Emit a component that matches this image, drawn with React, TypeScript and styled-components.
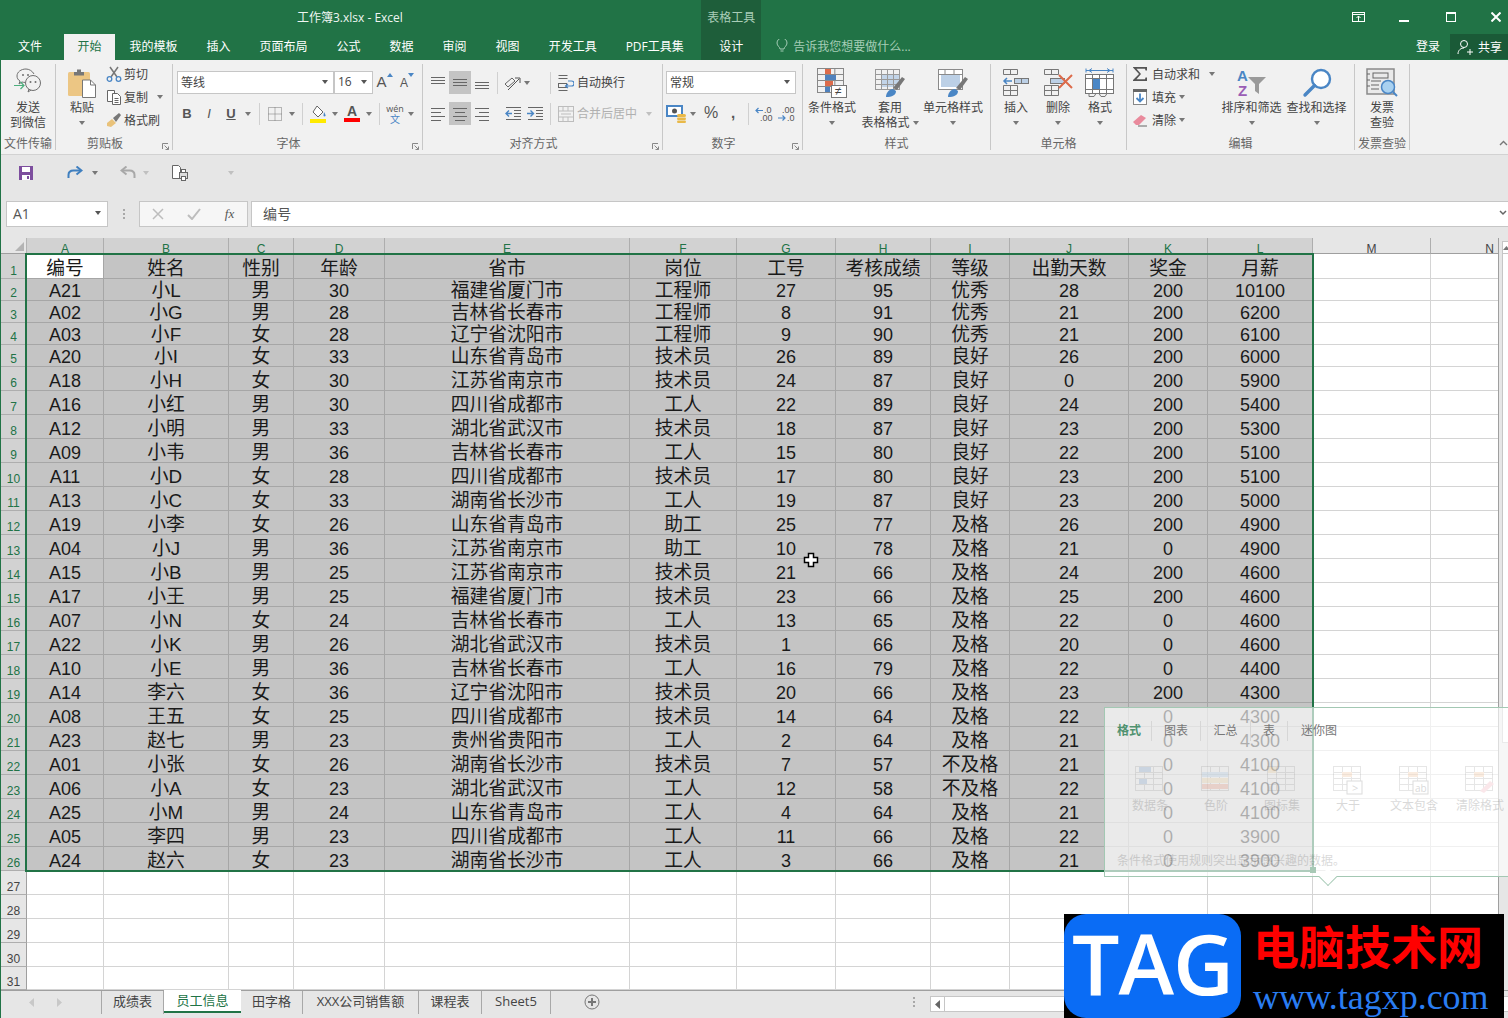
import React from "react";
import styled, { createGlobalStyle } from "styled-components";

const GlobalStyle = createGlobalStyle`
  html, body { margin: 0; padding: 0; background: #fff; }
  * { box-sizing: border-box; }
`;

const UI_FONT = `"Open Sans", "Noto Sans CJK SC", sans-serif`;
const GREEN = "#217346";

const Frame = styled.div`
  position: relative;
  width: 1508px;
  height: 1018px;
  overflow: hidden;
  border-left: 1px solid ${GREEN};
  font-family: ${UI_FONT};
  font-size: 12px;
  color: #444;
`;

/* ---------- title bar and tabs ---------- */
const Header = styled.header`
  height: 60px;
  background: ${GREEN};
  color: #fff;
`;
const TitleRow = styled.div`
  height: 34px;
  display: flex;
  align-items: center;
  padding-left: 296px;
`;
const Title = styled.div`
  flex: 1;
  font-size: 12px;
  color: #f0f5f2;
`;
const WinButton = styled.div<{ $w: number; $ml?: number }>`
  width: ${p => p.$w}px;
  margin-left: ${p => p.$ml ?? 0}px;
  display: flex;
  justify-content: center;
`;
const TabRow = styled.nav`
  height: 26px;
  display: flex;
  align-items: stretch;
`;
const FileTab = styled.div`
  width: 59px;
  margin-right: 4px;
  padding-left: 17px;
  line-height: 25px;
`;
const Tab = styled.div<{ $active?: boolean }>`
  padding: 0 14.5px;
  line-height: 25px;
  white-space: nowrap;
  ${p => p.$active && `background:#f1f1f1;color:${GREEN};padding:0 13.5px;`}
`;
const ContextTab = styled.div`
  position: relative;
  width: 60px;
  margin-left: 3px;
  background: #1e5e3a;
  text-align: center;
  line-height: 25px;
`;
const ContextLabel = styled.div`
  position: absolute;
  left: 0;
  right: 0;
  top: -34px;
  height: 34px;
  line-height: 35px;
  background: #1e5e3a;
  color: #a9cdb8;
  font-size: 12px;
`;
const TellMe = styled.div`
  margin-left: 15px;
  display: flex;
  align-items: center;
  gap: 5px;
  color: #a5cdb6;
  flex: 1;
  padding-bottom: 2px;
`;
const Login = styled.div`
  width: 34px;
  line-height: 25px;
`;
const ShareButton = styled.div`
  width: 58px;
  height: 25px;
  background: #1a5a37;
  display: flex;
  align-items: center;
  gap: 5px;
  padding-left: 7px;
`;

/* ---------- ribbon ---------- */
const Ribbon = styled.section`
  height: 95px;
  background: #f1f1f1;
  border-bottom: 1px solid #d2d2d2;
  padding-top: 4px;
  display: flex;
  position: relative;
`;
const Group = styled.div<{ $w: number }>`
  width: ${p => p.$w}px;
  height: 86px;
  border-right: 1px solid #c8c8c8;
  display: flex;
  flex-direction: column;
`;
const GroupBody = styled.div<{ $pl?: number; $pt?: number; $row?: boolean }>`
  height: 70px;
  padding-left: ${p => p.$pl ?? 0}px;
  padding-top: ${p => p.$pt ?? 0}px;
  display: flex;
  flex-direction: ${p => (p.$row ? "row" : "column")};
`;
const GroupFooter = styled.div<{ $launch?: boolean }>`
  height: 16px;
  display: grid;
  grid-template-columns: 1fr auto 1fr ${p => (p.$launch ? "18px" : "0")};
  align-items: center;
  color: #666;
  line-height: 16px;
  padding-top: 2px;
  white-space: nowrap;
`;
const Launcher = styled.div`
  justify-self: end;
  margin-right: 3px;
  margin-top: 4px;
  display: flex;
`;
const Big = styled.div<{ $w: number }>`
  width: ${p => p.$w}px;
  display: flex;
  flex-direction: column;
  align-items: center;
  line-height: 15px;
  white-space: nowrap;
`;
const BigIcon = styled.div`
  height: 36px;
  padding-top: 4px;
  display: flex;
  align-items: flex-start;
  justify-content: center;
`;
const BigLine = styled.div`
  display: flex;
  align-items: center;
  height: 15px;
  gap: 3px;
`;
const CaretRow = styled.div`
  height: 15px;
  display: flex;
  align-items: center;
`;
const Caret = styled.i<{ $faded?: boolean; $dark?: boolean }>`
  display: inline-block;
  width: 0;
  height: 0;
  flex: none;
  border-left: 3.5px solid transparent;
  border-right: 3.5px solid transparent;
  border-top: 4px solid ${p => (p.$faded ? "#c0c0c0" : p.$dark ? "#555" : "#777")};
`;
const Stack = styled.div<{ $ml?: number; $w: number }>`
  width: ${p => p.$w}px;
  margin-left: ${p => p.$ml ?? 0}px;
  margin-top: -2px;
  display: flex;
  flex-direction: column;
`;
const StackRow = styled.div`
  height: 23px;
  display: flex;
  align-items: center;
  white-space: nowrap;
`;
const StackIcon = styled.div<{ $w: number }>`
  width: ${p => p.$w}px;
  display: flex;
  justify-content: center;
`;
const StackLabel = styled.span`
  margin-left: 4px;
`;
const StackCaret = styled.div<{ $ml: number }>`
  margin-left: ${p => p.$ml}px;
  display: flex;
`;
const ToolRow = styled.div<{ $mt?: number; $ml?: number }>`
  height: 23px;
  margin-top: ${p => p.$mt ?? 0}px;
  margin-left: ${p => p.$ml ?? 0}px;
  display: flex;
  align-items: center;
`;
const Tool = styled.div<{ $w: number; $on?: boolean; $ml?: number }>`
  width: ${p => p.$w}px;
  height: 23px;
  margin-left: ${p => p.$ml ?? 0}px;
  flex: none;
  display: flex;
  align-items: center;
  justify-content: center;
  background: ${p => (p.$on ? "#c4c4c4" : "transparent")};
  color: #555;
`;
const ToolSep = styled.div<{ $l: number; $r: number; $h?: number }>`
  width: 1px;
  height: ${p => p.$h ?? 22}px;
  margin: 0 ${p => p.$r}px 0 ${p => p.$l}px;
  background: #d0d0d0;
  flex: none;
`;
const SelectBox = styled.div<{ $w: number }>`
  width: ${p => p.$w}px;
  height: 23px;
  border: 1px solid #c6c6c6;
  background: #fff;
  display: flex;
  align-items: center;
  justify-content: space-between;
  padding: 0 5px 2px 3px;
  color: #444;
  font-size: 12px;
  flex: none;
`;
const FaceButton = styled.span<{ $face: string }>`
  font-family: "Liberation Sans", sans-serif;
  font-size: 13px;
  font-weight: ${p => (p.$face === "I" ? 400 : 700)};
  font-style: ${p => (p.$face === "I" ? "italic" : "normal")};
  text-decoration: ${p => (p.$face === "U" ? "underline" : "none")};
`;
const SymbolMark = styled.span<{ $size: number; $bold?: boolean }>`
  font-family: "Liberation Sans", sans-serif;
  font-size: ${p => p.$size}px;
  font-weight: ${p => (p.$bold ? 700 : 400)};
  line-height: ${p => p.$size}px;
  padding-bottom: 2px;
`;
const GrowTool = styled(Tool)`
  gap: 0;
  align-items: flex-end;
  padding-bottom: 3px;
`;
const GrowArrow = styled.svg`
  align-self: flex-start;
  margin-top: 2px;
`;
const Pinyin = styled.div`
  display: flex;
  flex-direction: column;
  align-items: center;
  font-size: 9px;
  line-height: 10px;
  color: #555;
  & > b {
    font-weight: 400;
    font-size: 10px;
    color: #4a86c5;
  }
`;
const WrapLabel = styled.span<{ $muted?: boolean }>`
  margin-left: 3px;
  padding-bottom: 2px;
  color: ${p => (p.$muted ? "#b0b0b0" : "#444")};
  white-space: nowrap;
`;
const CollapseChevron = styled.div`
  position: absolute;
  right: 0;
  bottom: 4px;
`;

/* ---------- quick access and formula bar ---------- */
const QuickBar = styled.div`
  height: 35px;
  background: #e6e6e6;
  display: flex;
  align-items: center;
`;
const QuickItem = styled.div<{ $w: number; $ml?: number }>`
  width: ${p => p.$w}px;
  margin-left: ${p => p.$ml ?? 0}px;
  display: flex;
  align-items: center;
  justify-content: center;
`;
const FormulaBar = styled.div`
  height: 48px;
  background: #e6e6e6;
  padding: 11px 0 11px 5px;
  display: flex;
  align-items: stretch;
`;
const NameBox = styled.div`
  width: 102px;
  background: #fff;
  border: 1px solid #c6c6c6;
  display: flex;
  align-items: center;
  justify-content: space-between;
  padding: 0 6px 2px;
  font-size: 14px;
  color: #555;
`;
const GripDots = styled.div`
  width: 31px;
  display: flex;
  flex-direction: column;
  align-items: center;
  justify-content: center;
  gap: 2px;
  & > i {
    width: 2px;
    height: 2px;
    background: #a8a8a8;
  }
`;
const FormulaTools = styled.div`
  width: 109px;
  background: #f6f6f6;
  border: 1px solid #c6c6c6;
  display: grid;
  grid-template-columns: 36px 36px 35px;
  align-items: center;
  justify-items: center;
`;
const FxMark = styled.span`
  font-family: "Liberation Serif", serif;
  font-style: italic;
  font-size: 13px;
  color: #555;
`;
const FormulaInput = styled.div`
  flex: 1;
  margin-left: 3px;
  background: #fff;
  border: 1px solid #c6c6c6;
  border-right: none;
  display: flex;
  align-items: center;
  justify-content: space-between;
  padding: 0 1px 2px 11px;
  font-size: 14px;
  letter-spacing: 0.3px;
  color: #555;
`;

/* ---------- the sheet ---------- */
const columns = [77, 125, 65, 91, 245, 107, 99, 95, 79, 119, 79, 105, 118, 118];
const rowHeights = [25, 22, 22, 22, 22, ...Array(25).fill(24), 23];

const SheetArea = styled.div`
  display: flex;
  height: 752px;
`;
const SheetGrid = styled.div`
  width: 1497px;
  flex: none;
  overflow: hidden;
  display: grid;
  grid-template-columns: 26px ${columns.map(c => c + "px").join(" ")};
  grid-template-rows: 16px ${rowHeights.map(h => h + "px").join(" ")};
`;
const Corner = styled.div`
  background: #e6e6e6;
  border-right: 1px solid #b4b4b4;
  border-bottom: 1px solid #9f9f9f;
  display: flex;
  align-items: flex-end;
  justify-content: flex-end;
  padding: 0 2px 2px 0;
`;
const ColHead = styled.div<{ $on: boolean }>`
  background: ${p => (p.$on ? "#d2d2d2" : "#e6e6e6")};
  color: ${p => (p.$on ? GREEN : "#444")};
  border-right: 1px solid #aeaeae;
  border-bottom: 1px solid #9f9f9f;
  text-align: center;
  font-size: 12px;
  line-height: 12px;
  padding-top: 5px;
  font-family: "Liberation Sans", sans-serif;
`;
const RowHead = styled.div<{ $on: boolean }>`
  background: ${p => (p.$on ? "#d2d2d2" : "#e6e6e6")};
  color: ${p => (p.$on ? GREEN : "#444")};
  border-right: 1px solid #9f9f9f;
  border-bottom: 1px solid #aeaeae;
  display: flex;
  align-items: flex-end;
  justify-content: center;
  font-size: 12px;
  line-height: 14px;
  font-family: "Liberation Sans", sans-serif;
`;
const Cell = styled.div<{ $sel: boolean; $active?: boolean; $latin: boolean }>`
  background: ${p => (p.$active ? "#fff" : p.$sel ? "#c4c4c4" : "#fff")};
  border-right: 1px solid ${p => (p.$sel ? "#a6a6a6" : "#d4d4d4")};
  border-bottom: 1px solid ${p => (p.$sel ? "#a6a6a6" : "#d4d4d4")};
  display: flex;
  align-items: flex-end;
  justify-content: center;
  font-family: "Liberation Sans", "Noto Sans CJK SC", sans-serif;
  font-size: ${p => (p.$latin ? 18 : 18.8)}px;
  font-weight: 400;
  line-height: 18px;
  color: #1a1a1a;
  white-space: nowrap;
  overflow: hidden;
`;
const VScroll = styled.div`
  flex: 1;
  background: #e6e6e6;
  border-left: 1px solid #9f9f9f;
  padding: 3px 0 0 3px;
  display: flex;
  flex-direction: column;
`;
const VScrollUp = styled.div`
  height: 13px;
  background: #fff;
  border: 1px solid #c6c6c6;
  border-right: none;
  display: flex;
  align-items: center;
  justify-content: center;
`;
const VScrollThumb = styled.div`
  height: 489px;
  background: #fff;
  border: 1px solid #c6c6c6;
  border-top: none;
  border-right: none;
`;
const Selection = styled.div`
  position: absolute;
  left: 24px;
  top: 253px;
  width: 1289px;
  height: 619px;
  border: 2px solid ${GREEN};
  pointer-events: none;
`;
const CrossCursor = styled.div`
  position: absolute;
  left: 801px;
  top: 551px;
  display: flex;
`;

/* ---------- sheet tabs ---------- */
const SheetBar = styled.footer`
  height: 28px;
  background: #e6e6e6;
  border-top: 1px solid #9f9f9f;
  display: flex;
  align-items: flex-start;
`;
const NavArrows = styled.div`
  width: 100px;
  height: 22px;
  padding-left: 16px;
  display: flex;
  align-items: center;
`;
const NavArrow = styled.div`
  width: 28px;
  display: flex;
  justify-content: center;
`;
const SheetTab = styled.div<{ $w: number; $active?: boolean; $first?: boolean }>`
  width: ${p => p.$w}px;
  height: 23px;
  margin-top: ${p => (p.$active ? -1 : 0)}px;
  text-align: center;
  font-size: 13px;
  line-height: 20px;
  white-space: nowrap;
  color: ${p => (p.$active ? GREEN : "#444")};
  background: ${p => (p.$active ? "#fff" : "transparent")};
  border-bottom: ${p => (p.$active ? `2px solid ${GREEN}` : "none")};
  border-right: ${p => (p.$active ? "none" : "1px solid #a8a8a8")};
  border-left: ${p => (p.$first ? "1px solid #a8a8a8" : "none")};
`;
const AddSheet = styled.div`
  margin-left: 33px;
  margin-top: 3px;
  display: flex;
`;
const HDots = styled(GripDots)`
  width: 16px;
  height: 22px;
  margin-left: auto;
  margin-right: 8px;
`;
const HScroll = styled.div`
  width: 578px;
  height: 16px;
  margin-top: 5px;
  background: #fff;
  border: 1px solid #c6c6c6;
  border-right: none;
  display: flex;
`;
const HScrollLeft = styled.div`
  width: 14px;
  border-right: 1px solid #c6c6c6;
  display: flex;
  align-items: center;
  justify-content: center;
`;

/* ---------- quick analysis popup ---------- */
const Popup = styled.aside`
  position: absolute;
  left: 1103px;
  top: 707px;
  width: 420px;
  height: 170px;
  background: rgba(255, 255, 255, 0.64);
  border: 1px solid #a3c8b3;
  padding-left: 2px;
  display: flex;
  flex-direction: column;
`;
const PopupTabs = styled.div`
  height: 20px;
  margin-top: 13px;
  display: flex;
  align-items: center;
  color: #777;
`;
const PopupTab = styled.div<{ $w: number; $active?: boolean; $sep?: boolean }>`
  width: ${p => p.$w}px;
  height: 20px;
  line-height: 20px;
  text-align: center;
  font-weight: ${p => (p.$active ? 700 : 400)};
  color: ${p => (p.$active ? "#4f9270" : "#777")};
  border-right: ${p => (p.$sep ? "1px solid #d6d6d6" : "none")};
`;
const PopupCards = styled.div`
  display: flex;
  margin-top: 24px;
  margin-left: 10px;
  opacity: 0.2;
`;
const PopupCard = styled.div`
  width: 66px;
  display: flex;
  flex-direction: column;
  align-items: center;
  line-height: 16px;
  gap: 3px;
  color: #444;
  white-space: nowrap;
`;
const PopupNote = styled.div`
  margin-top: 37px;
  margin-left: 10px;
  color: #444;
  opacity: 0.2;
`;
const PopupArrow = styled.div`
  position: absolute;
  left: 1320px;
  top: 870px;
  width: 14px;
  height: 14px;
  background: #fff;
  border-right: 1px solid #a3c8b3;
  border-bottom: 1px solid #a3c8b3;
  transform: rotate(45deg) scale(0.92);
`;
const FillHandle = styled.div`
  position: absolute;
  left: 1309px;
  top: 867px;
  width: 6px;
  height: 6px;
  background: #a8c9b6;
`;

/* ---------- site watermark ---------- */
const Watermark = styled.div`
  position: absolute;
  left: 1063px;
  top: 914px;
  width: 440px;
  height: 104px;
  background: #000;
  display: flex;
`;
const WatermarkBadge = styled.div`
  width: 177px;
  height: 104px;
  background: #0a6cf5;
  border-radius: 22px;
  color: #fff;
  font-family: "Open Sans", sans-serif;
  font-weight: 600;
  font-size: 84px;
  line-height: 98px;
  text-align: center;
  letter-spacing: -1px;
`;
const WatermarkText = styled.div`
  flex: 1;
  padding-left: 12px;
  display: flex;
  flex-direction: column;
`;
const WatermarkCn = styled.div`
  color: #f00;
  font-family: "Noto Sans CJK SC", sans-serif;
  font-weight: 700;
  font-size: 46px;
  line-height: 60px;
  white-space: nowrap;
`;
const WatermarkUrl = styled.div`
  color: #2a7df2;
  font-family: "Liberation Serif", serif;
  font-size: 36px;
  line-height: 40px;
  margin-top: 3px;
  white-space: nowrap;
`;

/* ---------- icons ---------- */
const GRAY = "#6f6f6f";
const BLUE = "#4a86c5";

const Lines = ({ ys, xs }: { ys: number[]; xs: [number, number][] }) => (
  <svg width="16" height="16" viewBox="0 0 16 16">
    {ys.map((y, i) => (
      <line key={i} x1={xs[i][0]} x2={xs[i][1]} y1={y + 0.5} y2={y + 0.5} stroke="#666" />
    ))}
  </svg>
);
const full: [number, number][] = [[1, 15], [1, 15], [1, 15], [1, 15]];

const Wechat = () => (
  <svg width="28" height="28" viewBox="0 0 28 28" fill="none">
    <path d="M12 1c-5 0-9 3-9 7 0 2 1 4 3 5l-1 3 3-2c1 .3 2 .4 3 .4" stroke={GRAY} />
    <path d="M20 6c-1.500-3-5-5-8-5" stroke={GRAY} />
    <circle cx="19" cy="15" r="7.500" stroke={GRAY} />
    <path d="M15 21l-1 3 3-2" stroke={GRAY} />
    <circle cx="9" cy="7" r="1" fill={GRAY} />
    <circle cx="14" cy="7" r="1" fill={GRAY} />
    <circle cx="16.500" cy="14" r="1" fill={GRAY} />
    <circle cx="21.500" cy="14" r="1" fill={GRAY} />
    <path d="M0 17.500h10M6.500 14l3.500 3.500-3.500 3.500" stroke="#4caf7d" strokeWidth="1.200" />
  </svg>
);
const Paste = () => (
  <svg width="30" height="30" viewBox="0 0 30 30">
    <rect x="1" y="4" width="22" height="24" rx="1.500" fill="#ecc684" />
    <path d="M7 4h3V1.500h4V4h3v3.500H7z" fill="#777" />
    <path d="M15.500 12h8l5 5v12.500h-13z" fill="#fff" stroke="#777" />
    <path d="M23.500 12v5h5" fill="none" stroke="#777" />
  </svg>
);
const Scissors = () => (
  <svg width="16" height="16" viewBox="0 0 16 16" fill="none">
    <path d="M4 1l7 10M12 1L5 11" stroke="#777" strokeWidth="1.500" />
    <circle cx="3.500" cy="13" r="2.300" stroke={BLUE} strokeWidth="1.300" />
    <circle cx="12.500" cy="13" r="2.300" stroke={BLUE} strokeWidth="1.300" />
  </svg>
);
const CopyIcon = () => (
  <svg width="16" height="16" viewBox="0 0 16 16" fill="#fff" stroke="#666">
    <path d="M1.500 1.500h7v11h-7z" />
    <path d="M6.500 4.500h5l3 3v8h-8z" />
    <path d="M8.500 9.500h4M8.500 11.500h4M8.500 13.500h4" />
  </svg>
);
const BrushIcon = () => (
  <svg width="16" height="16" viewBox="0 0 16 16">
    <path d="M1 11l5-4 4 4-5 4-4-1z" fill="#e9c27a" />
    <path d="M7 6l6-5 2 2-5 7z" fill="#777" />
  </svg>
);
const Launch = () => (
  <svg width="7" height="7" viewBox="0 0 7 7" fill="none" stroke="#888">
    <path d="M.5 6V.5H6" />
    <path d="M2.500 2.500l4 4M6.500 3.500v3h-3" />
  </svg>
);
const BorderIcon = () => (
  <svg width="14" height="14" viewBox="0 0 14 14" fill="none" stroke="#777" strokeDasharray="1 1">
    <rect x=".5" y=".5" width="13" height="13" />
    <path d="M7 .5v13M.5 7h13" />
  </svg>
);
const FillIcon = () => (
  <svg width="18" height="18" viewBox="0 0 18 18">
    <path d="M8 1l6 6-5 5-5-5z" fill="#fff" stroke="#666" />
    <path d="M15 7c1 2 2 3 1.500 4-.5.7-2 .5-2-.5z" fill={BLUE} />
    <rect x="1" y="14" width="16" height="4" fill="#ffea00" />
  </svg>
);
const Orient = () => (
  <svg width="18" height="16" viewBox="0 0 18 16" fill="none" stroke="#666">
    <path d="M2 9l7-6 3 3-7 6z" />
    <path d="M5 15L16 4" stroke="#555" />
    <path d="M12 3h5v5" stroke="#555" />
  </svg>
);
const Indent = ({ right }: { right?: boolean }) => (
  <svg width="16" height="14" viewBox="0 0 16 14" fill="none">
    <path d="M1 .5h15M9 3.500h7M9 6.500h7M9 9.500h7M1 12.500h15" stroke="#666" />
    <path d={right ? "M0 6.500h6M3.500 3.500l3 3-3 3" : "M7 6.500H1M4 3.500l-3 3 3 3"} stroke={BLUE} strokeWidth="1.400" />
  </svg>
);
const WrapIcon = () => (
  <svg width="16" height="16" viewBox="0 0 16 16" fill="none">
    <path d="M.5.5h9M.5 3.500h9M.5 15.500h9" stroke="#666" />
    <rect x=".5" y="8.500" width="8" height="4" stroke="#666" />
    <path d="M10 6h3.500a2 2 0 010 5H8M10 9l-2.500 2 2.500 2" stroke={BLUE} strokeWidth="1.200" />
  </svg>
);
const MergeIcon = () => (
  <svg width="16" height="16" viewBox="0 0 16 16" fill="none" stroke="#bdbdbd">
    <rect x=".5" y=".5" width="15" height="15" />
    <path d="M.5 5h15M.5 11h15M5 5v-4M10 5v-4M5 11v4M10 11v4M3 8h10" />
  </svg>
);
const Currency = () => (
  <svg width="22" height="18" viewBox="0 0 22 18">
    <rect x="1" y="1" width="15" height="10" fill="#fff" stroke={BLUE} strokeWidth="2" />
    <circle cx="8.500" cy="6" r="2.500" fill="#555" />
    <rect x="11" y="9" width="9" height="3" rx="1.500" fill="#e9b949" />
    <rect x="11" y="12.500" width="9" height="2.500" rx="1.200" fill="#e9b949" />
    <rect x="11" y="15.500" width="9" height="2.500" rx="1.200" fill="#e9b949" />
  </svg>
);
const Decimal = ({ more }: { more?: boolean }) => (
  <svg width="18" height="16" viewBox="0 0 18 16" fontFamily="Liberation Sans" fontSize="9" fill="#555">
    {more ? (
      <>
        <text x="5" y="7">.00</text>
        <text x="10" y="15">.0</text>
        <path d="M1 12h7M5.500 9.500L8 12l-2.500 2.500" fill="none" stroke={BLUE} strokeWidth="1.200" />
      </>
    ) : (
      <>
        <text x="9" y="7">.0</text>
        <text x="5" y="15">.00</text>
        <path d="M8 4.500H1M3.500 2L1 4.500 3.500 7" fill="none" stroke={BLUE} strokeWidth="1.200" />
      </>
    )}
  </svg>
);
const GridLines = ({ x, y, w, h, cols, rows, color = "#888" }: { x: number; y: number; w: number; h: number; cols: number; rows: number; color?: string }) => (
  <g fill="none" stroke={color}>
    <rect x={x + 0.5} y={y + 0.5} width={w} height={h} />
    {Array.from({ length: cols - 1 }, (_, i) => (
      <line key={"c" + i} x1={x + 0.5 + ((i + 1) * w) / cols} x2={x + 0.5 + ((i + 1) * w) / cols} y1={y} y2={y + h} />
    ))}
    {Array.from({ length: rows - 1 }, (_, i) => (
      <line key={"r" + i} x1={x} x2={x + w} y1={y + 0.5 + ((i + 1) * h) / rows} y2={y + 0.5 + ((i + 1) * h) / rows} />
    ))}
  </g>
);
const CondFormat = () => (
  <svg width="32" height="30" viewBox="0 0 32 30">
    <GridLines x={1} y={0} w={26} h={24} cols={3} rows={4} />
    <rect x="9" y="1" width="6" height="5" fill="#dd6b4a" />
    <rect x="9" y="7" width="11" height="5" fill="#4f81bd" />
    <rect x="9" y="13" width="8" height="5" fill="#dd6b4a" />
    <rect x="9" y="19" width="5" height="5" fill="#4f81bd" />
    <rect x="15.500" y="17.500" width="15" height="12" fill="#fff" stroke="#777" />
    <text x="19" y="27" fontSize="12" fill="#444" fontFamily="Liberation Sans">≠</text>
  </svg>
);
const TableFormat = () => (
  <svg width="32" height="30" viewBox="0 0 32 30">
    <rect x="7" y="6" width="19" height="13" fill="#c2d4e8" />
    <GridLines x={1} y={1} w={24} h={20} cols={4} rows={4} color="#999" />
    <path d="M19 20l9-11 3 2-8 11z" fill="#777" />
    <path d="M12 29c0-4 3-8 7-8l3 2c0 4-4 6-10 6z" fill={BLUE} />
  </svg>
);
const CellStyle = () => (
  <svg width="32" height="30" viewBox="0 0 32 30">
    <rect x="1.500" y="1.500" width="24" height="20" fill="#fff" stroke="#8a8a8a" />
    <path d="M1.500 6.500h24M8 1.500v5M17 1.500v5" stroke="#8a8a8a" fill="none" />
    <rect x="4" y="7" width="19" height="12" fill="#bcd0e6" />
    <path d="M19 20l9-11 3 2-8 11z" fill="#777" />
    <path d="M11 29c0-4 3-8 7-8l3 2c0 4-4 6-10 6z" fill={BLUE} />
  </svg>
);
const InsertCells = () => (
  <svg width="28" height="28" viewBox="0 0 28 28" fill="none" stroke="#777">
    <path d="M1.500 1.500h14v5h-14zM8.500 1.500v5M1.500 17.500h14v10h-14zM1.500 22.500h14M8.500 17.500v10" />
    <rect x="12.500" y="10.500" width="14" height="5" fill="#bcd0e6" />
    <path d="M19.500 10.500v5" />
    <path d="M10 13H2M5 10l-3 3 3 3" stroke={BLUE} strokeWidth="1.500" />
  </svg>
);
const DeleteCells = () => (
  <svg width="30" height="28" viewBox="0 0 30 28" fill="none" stroke="#777">
    <path d="M1.500 1.500h14v5h-14zM8.500 1.500v5M1.500 17.500h14v10h-14zM1.500 22.500h14M8.500 17.500v10" />
    <rect x="7.500" y="10.500" width="14" height="5" fill="#bcd0e6" />
    <path d="M16 7l13 13M29 7L16 20" stroke="#dd6b4a" strokeWidth="2" />
  </svg>
);
const FormatCells = () => (
  <svg width="30" height="32" viewBox="0 0 30 32" fill="none">
    <path d="M1 2.500h27M1 .5v4M28 .5v4M4 2.500l3-2M4 2.500l3 2M25 2.500l-3-2M25 2.500l-3 2" stroke={BLUE} />
    <g stroke="#777">
      <rect x=".5" y="6.500" width="28" height="19" fill="#fff" />
      <path d="M.5 10.500h28M.5 21.500h28M7.500 6.500v19M21.500 6.500v19M14.500 6.500v19" />
      <path d="M4 25.500v3h5l2-3M14 25.500l2 3h4l2-3" />
    </g>
    <rect x="8" y="11" width="7" height="10" fill={BLUE} />
  </svg>
);
const Sigma = () => (
  <svg width="16" height="16" viewBox="0 0 16 16">
    <path d="M1 1h14v3.500h-1.500L13 2.800H4.500L9 8l-4.500 5.200H13l.5-1.700H15V15H1v-1l6-6-6-6.500z" fill="#555" />
  </svg>
);
const FillDown = () => (
  <svg width="14" height="16" viewBox="0 0 14 16" fill="none">
    <rect x=".5" y=".5" width="13" height="15" fill="#fff" stroke="#888" />
    <rect x="0" y="0" width="14" height="3" fill="#666" />
    <path d="M7 4.500v8M3.500 9L7 12.500 10.500 9" stroke={BLUE} strokeWidth="1.800" />
  </svg>
);
const Eraser = () => (
  <svg width="16" height="14" viewBox="0 0 16 14">
    <path d="M1 9l8-7 5 3-7 7H4z" fill="#e98a9c" />
    <path d="M6 13h9" stroke="#666" />
  </svg>
);
const SortFilter = () => (
  <svg width="32" height="30" viewBox="0 0 32 30" fontFamily="Liberation Sans" fontWeight="700" fontSize="15">
    <text x="1" y="13" fill={BLUE}>A</text>
    <text x="2" y="28" fill="#9a5db5">Z</text>
    <path d="M12 9h18l-7 7v10l-4-3v-7z" fill="#9a9a9a" />
  </svg>
);
const Magnifier = () => (
  <svg width="30" height="30" viewBox="0 0 30 30" fill="none">
    <circle cx="19" cy="11" r="9" fill="#fff" stroke={BLUE} strokeWidth="2.400" />
    <path d="M12.500 17.500L3 27" stroke={BLUE} strokeWidth="3.400" strokeLinecap="round" />
  </svg>
);
const Invoice = () => (
  <svg width="32" height="30" viewBox="0 0 32 30" fill="none">
    <rect x="1" y="1" width="27" height="25" fill="#eaeaea" stroke="#8a8a8a" strokeWidth="1.500" />
    <rect x="7" y="5" width="15" height="5" stroke="#666" />
    <path d="M5 13h10M5 17h8M5 21h8M1 6h3M1 12h3M1 18h3" stroke="#666" />
    <circle cx="22" cy="19" r="6.500" fill="#a9d1f0" stroke={BLUE} strokeWidth="1.500" />
    <path d="M27 24l4 4" stroke={BLUE} strokeWidth="2" />
  </svg>
);
const SaveIcon = () => (
  <svg width="16" height="16" viewBox="0 0 16 16">
    <path d="M1 1h14v14H1z" fill="#7d4e9e" />
    <rect x="4" y="2" width="8" height="5" fill="#fff" />
    <rect x="4" y="10" width="8" height="5" fill="#fff" />
    <rect x="9" y="11" width="2" height="3" fill="#7d4e9e" />
  </svg>
);
const Curve = ({ flip, color }: { flip?: boolean; color: string }) => (
  <svg width="16" height="14" viewBox="0 0 16 14" fill="none" transform={flip ? "scale(-1 1)" : undefined}>
    <path d="M1.500 12V9c0-3 2-4.500 5-4.500h7" stroke={color} strokeWidth="2" />
    <path d="M9.500 .5l5 4-5 4" stroke={color} strokeWidth="2" />
  </svg>
);
const PrintPreview = () => (
  <svg width="18" height="18" viewBox="0 0 18 18" fill="none" stroke="#666">
    <path d="M1.500 1.500h6l2 2v11h-8z" fill="#fff" />
    <rect x="8.500" y="8.500" width="8" height="6" fill="#ddd" />
    <rect x="10.500" y="5.500" width="4" height="3" fill="#fff" />
    <rect x="10.500" y="12.500" width="4" height="4" fill="#fff" />
  </svg>
);
const Tri = ({ dir, color }: { dir: "l" | "r" | "u"; color: string }) => (
  <svg width="7" height="9" viewBox="0 0 7 9">
    <path d={dir === "l" ? "M6 0v9L1 4.500z" : dir === "r" ? "M1 0v9l5-4.500z" : "M0 7l3.500-4L7 7z"} fill={color} />
  </svg>
);
const QuickSheetIcon = ({ mark }: { mark: React.ReactNode }) => (
  <svg width="32" height="30" viewBox="0 0 32 30">
    <GridLines x={1} y={1} w={27} h={24} cols={3} rows={4} />
    {mark}
  </svg>
);
const ColorBar = styled.i<{ $c: string }>`
  display: block;
  width: 16px;
  height: 4px;
  background: ${p => p.$c};
`;
const ColorLetter = styled.div`
  display: flex;
  flex-direction: column;
  align-items: center;
  font-family: "Liberation Sans", sans-serif;
  font-weight: 700;
  font-size: 14px;
  line-height: 13px;
`;

/* ---------- data ---------- */
const letters = "ABCDEFGHIJKLMN".split("");
const selCols = 12;

const records = `编号 姓名 性别 年龄 省市 岗位 工号 考核成绩 等级 出勤天数 奖金 月薪
A21 小L 男 30 福建省厦门市 工程师 27 95 优秀 28 200 10100
A02 小G 男 28 吉林省长春市 工程师 8 91 优秀 21 200 6200
A03 小F 女 28 辽宁省沈阳市 工程师 9 90 优秀 21 200 6100
A20 小I 女 33 山东省青岛市 技术员 26 89 良好 26 200 6000
A18 小H 女 30 江苏省南京市 技术员 24 87 良好 0 200 5900
A16 小红 男 30 四川省成都市 工人 22 89 良好 24 200 5400
A12 小明 男 33 湖北省武汉市 技术员 18 87 良好 23 200 5300
A09 小韦 男 36 吉林省长春市 工人 15 80 良好 22 200 5100
A11 小D 女 28 四川省成都市 技术员 17 80 良好 23 200 5100
A13 小C 女 33 湖南省长沙市 工人 19 87 良好 23 200 5000
A19 小李 女 26 山东省青岛市 助工 25 77 及格 26 200 4900
A04 小J 男 36 江苏省南京市 助工 10 78 及格 21 0 4900
A15 小B 男 25 江苏省南京市 技术员 21 66 及格 24 200 4600
A17 小王 男 25 福建省厦门市 技术员 23 66 及格 25 200 4600
A07 小N 女 24 吉林省长春市 工人 13 65 及格 22 0 4600
A22 小K 男 26 湖北省武汉市 技术员 1 66 及格 20 0 4600
A10 小E 男 36 吉林省长春市 工人 16 79 及格 22 0 4400
A14 李六 女 36 辽宁省沈阳市 技术员 20 66 及格 23 200 4300
A08 王五 女 25 四川省成都市 技术员 14 64 及格 22 0 4300
A23 赵七 男 23 贵州省贵阳市 工人 2 64 及格 21 0 4300
A01 小张 女 26 湖南省长沙市 技术员 7 57 不及格 21 0 4100
A06 小A 女 23 湖北省武汉市 工人 12 58 不及格 22 0 4100
A25 小M 男 24 山东省青岛市 工人 4 64 及格 21 0 4100
A05 李四 男 23 四川省成都市 工人 11 66 及格 22 0 3900
A24 赵六 女 23 湖南省长沙市 工人 3 66 及格 21 0 3900`
  .split("\n")
  .map(line => line.split(" "));

const menuTabs = ["我的模板", "插入", "页面布局", "公式", "数据", "审阅", "视图", "开发工具", "PDF工具集"];
const sheets = [
  { name: "成绩表", w: 63, first: true },
  { name: "员工信息", w: 77, active: true },
  { name: "田字格", w: 62 },
  { name: "XXX公司销售额", w: 116 },
  { name: "课程表", w: 63 },
  { name: "Sheet5", w: 69 }
];

const BigButton = ({ w, icon, lines, inlineCaret }: { w: number; icon: React.ReactNode; lines: string[]; inlineCaret?: boolean }) => (
  <Big $w={w}>
    <BigIcon>{icon}</BigIcon>
    {lines.map((line, i) => (
      <BigLine key={line}>
        {line}
        {inlineCaret && i === lines.length - 1 ? <Caret /> : null}
      </BigLine>
    ))}
    {lines.length === 1 ? (
      <CaretRow>
        <Caret />
      </CaretRow>
    ) : null}
  </Big>
);

const Footer = ({ label, launch }: { label: string; launch?: boolean }) => (
  <GroupFooter $launch={launch}>
    <span />
    <span>{label}</span>
    <span />
    {launch ? (
      <Launcher>
        <Launch />
      </Launcher>
    ) : null}
  </GroupFooter>
);

const RibbonBar = () => (
  <Ribbon>
    <Group $w={55}>
      <GroupBody>
        <Big $w={54}>
          <BigIcon>
            <Wechat />
          </BigIcon>
          <BigLine>发送</BigLine>
          <BigLine>到微信</BigLine>
        </Big>
      </GroupBody>
      <Footer label="文件传输" />
    </Group>

    <Group $w={117}>
      <GroupBody $row>
        <Big $w={52}>
          <BigIcon>
            <Paste />
          </BigIcon>
          <BigLine>粘贴</BigLine>
          <CaretRow>
            <Caret />
          </CaretRow>
        </Big>
        <Stack $ml={-4} $w={64}>
          <StackRow>
            <StackIcon $w={20}>
              <Scissors />
            </StackIcon>
            剪切
          </StackRow>
          <StackRow>
            <StackIcon $w={20}>
              <CopyIcon />
            </StackIcon>
            复制
            <StackCaret $ml={9}>
              <Caret />
            </StackCaret>
          </StackRow>
          <StackRow>
            <StackIcon $w={20}>
              <BrushIcon />
            </StackIcon>
            格式刷
          </StackRow>
        </Stack>
      </GroupBody>
      <Footer label="剪贴板" launch />
    </Group>

    <Group $w={250}>
      <GroupBody $pt={7}>
        <ToolRow $ml={4}>
          <SelectBox $w={157}>
            等线
            <Caret $dark />
          </SelectBox>
          <SelectBox $w={39}>
            16
            <Caret $dark />
          </SelectBox>
          <GrowTool $w={23}>
            <SymbolMark $size={15}>A</SymbolMark>
            <GrowArrow width="6" height="4" viewBox="0 0 6 4">
              <path d="M0 4l3-4 3 4z" fill={BLUE} />
            </GrowArrow>
          </GrowTool>
          <GrowTool $w={22}>
            <SymbolMark $size={12}>A</SymbolMark>
            <GrowArrow width="6" height="4" viewBox="0 0 6 4">
              <path d="M0 0h6L3 4z" fill={BLUE} />
            </GrowArrow>
          </GrowTool>
        </ToolRow>
        <ToolRow $mt={8} $ml={3}>
          <Tool $w={22}>
            <FaceButton $face="B">B</FaceButton>
          </Tool>
          <Tool $w={22}>
            <FaceButton $face="I">I</FaceButton>
          </Tool>
          <Tool $w={22}>
            <FaceButton $face="U">U</FaceButton>
          </Tool>
          <Tool $w={12}>
            <Caret />
          </Tool>
          <ToolSep $l={5} $r={4} />
          <Tool $w={22}>
            <BorderIcon />
          </Tool>
          <Tool $w={12}>
            <Caret />
          </Tool>
          <ToolSep $l={4} $r={3} />
          <Tool $w={24}>
            <FillIcon />
          </Tool>
          <Tool $w={10}>
            <Caret />
          </Tool>
          <Tool $w={24}>
            <ColorLetter>
              A
              <ColorBar $c="#f00" />
            </ColorLetter>
          </Tool>
          <Tool $w={10}>
            <Caret />
          </Tool>
          <ToolSep $l={5} $r={4} />
          <Tool $w={22}>
            <Pinyin>
              wén
              <b>文</b>
            </Pinyin>
          </Tool>
          <Tool $w={10}>
            <Caret />
          </Tool>
        </ToolRow>
      </GroupBody>
      <Footer label="字体" launch />
    </Group>

    <Group $w={240}>
      <GroupBody $pt={7}>
        <ToolRow $ml={4}>
          <Tool $w={22}>
            <Lines ys={[2, 5, 8]} xs={full} />
          </Tool>
          <Tool $w={22} $on>
            <Lines ys={[4, 7, 10]} xs={full} />
          </Tool>
          <Tool $w={22}>
            <Lines ys={[7, 10, 13]} xs={full} />
          </Tool>
          <ToolSep $l={4} $r={4} />
          <Tool $w={20}>
            <Orient />
          </Tool>
          <Tool $w={10}>
            <Caret />
          </Tool>
          <ToolSep $l={18} $r={7} />
          <WrapIcon />
          <WrapLabel>自动换行</WrapLabel>
        </ToolRow>
        <ToolRow $mt={8} $ml={4}>
          <Tool $w={22}>
            <Lines ys={[2, 6, 10, 14]} xs={[[1, 15], [1, 11], [1, 15], [1, 11]]} />
          </Tool>
          <Tool $w={22} $on>
            <Lines ys={[2, 6, 10, 14]} xs={[[1, 15], [3, 13], [1, 15], [3, 13]]} />
          </Tool>
          <Tool $w={22}>
            <Lines ys={[2, 6, 10, 14]} xs={[[1, 15], [5, 15], [1, 15], [5, 15]]} />
          </Tool>
          <Tool $w={22} $ml={9}>
            <Indent />
          </Tool>
          <Tool $w={22}>
            <Indent right />
          </Tool>
          <ToolSep $l={4} $r={7} />
          <MergeIcon />
          <WrapLabel $muted>合并后居中</WrapLabel>
          <Tool $w={24}>
            <Caret $faded />
          </Tool>
        </ToolRow>
      </GroupBody>
      <Footer label="对齐方式" launch />
    </Group>

    <Group $w={140}>
      <GroupBody $pt={7}>
        <ToolRow $ml={3}>
          <SelectBox $w={130}>
            常规
            <Caret $dark />
          </SelectBox>
        </ToolRow>
        <ToolRow $mt={8} $ml={3}>
          <Tool $w={22}>
            <Currency />
          </Tool>
          <Tool $w={10}>
            <Caret />
          </Tool>
          <Tool $w={26}>
            <SymbolMark $size={16}>%</SymbolMark>
          </Tool>
          <Tool $w={18}>
            <SymbolMark $size={15} $bold>,</SymbolMark>
          </Tool>
          <ToolSep $l={6} $r={4} />
          <Tool $w={22}>
            <Decimal />
          </Tool>
          <Tool $w={22}>
            <Decimal more />
          </Tool>
        </ToolRow>
      </GroupBody>
      <Footer label="数字" launch />
    </Group>

    <Group $w={188}>
      <GroupBody $row>
        <BigButton w={58} icon={<CondFormat />} lines={["条件格式"]} />
        <BigButton w={58} icon={<TableFormat />} lines={["套用", "表格格式"]} inlineCaret />
        <BigButton w={68} icon={<CellStyle />} lines={["单元格样式"]} />
      </GroupBody>
      <Footer label="样式" />
    </Group>

    <Group $w={136}>
      <GroupBody $row $pl={4}>
        <BigButton w={42} icon={<InsertCells />} lines={["插入"]} />
        <BigButton w={42} icon={<DeleteCells />} lines={["删除"]} />
        <BigButton w={42} icon={<FormatCells />} lines={["格式"]} />
      </GroupBody>
      <Footer label="单元格" />
    </Group>

    <Group $w={228}>
      <GroupBody $row>
        <Stack $ml={5} $w={87}>
          <StackRow>
            <StackIcon $w={16}>
              <Sigma />
            </StackIcon>
            <StackLabel>自动求和</StackLabel>
            <StackCaret $ml={9}>
              <Caret />
            </StackCaret>
          </StackRow>
          <StackRow>
            <StackIcon $w={16}>
              <FillDown />
            </StackIcon>
            <StackLabel>填充</StackLabel>
            <StackCaret $ml={3}>
              <Caret />
            </StackCaret>
          </StackRow>
          <StackRow>
            <StackIcon $w={16}>
              <Eraser />
            </StackIcon>
            <StackLabel>清除</StackLabel>
            <StackCaret $ml={3}>
              <Caret />
            </StackCaret>
          </StackRow>
        </Stack>
        <BigButton w={65} icon={<SortFilter />} lines={["排序和筛选"]} />
        <BigButton w={65} icon={<Magnifier />} lines={["查找和选择"]} />
      </GroupBody>
      <Footer label="编辑" />
    </Group>

    <Group $w={55}>
      <GroupBody>
        <Big $w={54}>
          <BigIcon>
            <Invoice />
          </BigIcon>
          <BigLine>发票</BigLine>
          <BigLine>查验</BigLine>
        </Big>
      </GroupBody>
      <Footer label="发票查验" />
    </Group>

    <CollapseChevron>
      <svg width="9" height="6" viewBox="0 0 9 6" fill="none">
        <path d="M1 5l3.500-3.500L8 5" stroke="#777" strokeWidth="1.400" />
      </svg>
    </CollapseChevron>
  </Ribbon>
);

const App = () => (
  <Frame>
    <GlobalStyle />
    <Header>
      <TitleRow>
        <Title>工作簿3.xlsx - Excel</Title>
        <WinButton $w={46}>
          <svg width="13" height="10" viewBox="0 0 13 10" fill="none" stroke="#fff">
            <rect x=".5" y=".5" width="12" height="9" />
            <path d="M.5 2.500h12M6.500 9V4M4.500 6l2-2 2 2" />
          </svg>
        </WinButton>
        <WinButton $w={46}>
          <svg width="10" height="10" viewBox="0 0 10 10">
            <rect y="8" width="10" height="2" fill="#fff" />
          </svg>
        </WinButton>
        <WinButton $w={47}>
          <svg width="10" height="10" viewBox="0 0 10 10" fill="none" stroke="#fff">
            <rect x=".5" y=".5" width="9" height="9" />
            <path d="M0 1.500h10" />
          </svg>
        </WinButton>
        <WinButton $w={24} $ml={10}>
          <svg width="10" height="10" viewBox="0 0 10 10" stroke="#fff" strokeWidth="2">
            <path d="M.5.5l9 9M9.500.5l-9 9" />
          </svg>
        </WinButton>
      </TitleRow>
      <TabRow>
        <FileTab>文件</FileTab>
        <Tab $active>开始</Tab>
        {menuTabs.map(name => (
          <Tab key={name}>{name}</Tab>
        ))}
        <ContextTab>
          <ContextLabel>表格工具</ContextLabel>
          设计
        </ContextTab>
        <TellMe>
          <svg width="12" height="14" viewBox="0 0 12 14" fill="none" stroke="#a5cdb6">
            <path d="M4 10c0-2-3-3-3-6a5 5 0 0110 0c0 3-3 4-3 6zM4.500 12h3" />
          </svg>
          告诉我您想要做什么...
        </TellMe>
        <Login>登录</Login>
        <ShareButton>
          <svg width="16" height="16" viewBox="0 0 16 16" fill="none" stroke="#fff">
            <circle cx="7" cy="5" r="3.500" />
            <path d="M1 15c0-4 3-6 6-6M10 13h6M13 10v6" />
          </svg>
          共享
        </ShareButton>
      </TabRow>
    </Header>

    <RibbonBar />

    <QuickBar>
      <QuickItem $w={50}>
        <SaveIcon />
      </QuickItem>
      <QuickItem $w={16} $ml={16}>
        <Curve color="#3f7fbf" />
      </QuickItem>
      <QuickItem $w={20} $ml={2}>
        <Caret />
      </QuickItem>
      <QuickItem $w={18} $ml={14}>
        <Curve flip color="#a8a8a8" />
      </QuickItem>
      <QuickItem $w={18}>
        <Caret $faded />
      </QuickItem>
      <QuickItem $w={18} $ml={16}>
        <PrintPreview />
      </QuickItem>
      <QuickItem $w={10} $ml={37}>
        <Caret $faded />
      </QuickItem>
    </QuickBar>

    <FormulaBar>
      <NameBox>
        A1
        <Caret $dark />
      </NameBox>
      <GripDots>
        <i />
        <i />
        <i />
      </GripDots>
      <FormulaTools>
        <svg width="12" height="12" viewBox="0 0 12 12" stroke="#bdbdbd" strokeWidth="1.500">
          <path d="M1 1l10 10M11 1L1 11" />
        </svg>
        <svg width="14" height="12" viewBox="0 0 14 12" fill="none" stroke="#bdbdbd" strokeWidth="2">
          <path d="M1 7l4 4 8-10" />
        </svg>
        <FxMark>fx</FxMark>
      </FormulaTools>
      <FormulaInput>
        编号
        <svg width="8" height="6" viewBox="0 0 8 6" fill="none">
          <path d="M1 1l3 3 3-3" stroke="#666" strokeWidth="1.500" />
        </svg>
      </FormulaInput>
    </FormulaBar>

    <SheetArea>
      <SheetGrid>
        <Corner>
          <svg width="9" height="9" viewBox="0 0 9 9">
            <path d="M9 0v9H0z" fill="#b4b4b4" />
          </svg>
        </Corner>
        {letters.map((l, i) => (
          <ColHead key={l} $on={i < selCols}>
            {l}
          </ColHead>
        ))}
        {rowHeights.map((h, r) => (
          <React.Fragment key={r}>
            <RowHead $on={r < records.length}>{r + 1}</RowHead>
            {letters.map((_, c) => {
              const text = r < records.length ? records[r][c] ?? "" : "";
              return (
                <Cell
                  key={c}
                  $sel={r < records.length && c < selCols}
                  $active={r === 0 && c === 0}
                  $latin={/^[\x00-\x7f]*$/.test(text)}
                >
                  {text}
                </Cell>
              );
            })}
          </React.Fragment>
        ))}
      </SheetGrid>
      <VScroll>
        <VScrollUp>
          <Tri dir="u" color="#777" />
        </VScrollUp>
        <VScrollThumb />
      </VScroll>
    </SheetArea>

    <SheetBar>
      <NavArrows>
        <NavArrow>
          <Tri dir="l" color="#c8c8c8" />
        </NavArrow>
        <NavArrow>
          <Tri dir="r" color="#c8c8c8" />
        </NavArrow>
      </NavArrows>
      {sheets.map(s => (
        <SheetTab key={s.name} $w={s.w} $active={s.active} $first={s.first}>
          {s.name}
        </SheetTab>
      ))}
      <AddSheet>
        <svg width="16" height="16" viewBox="0 0 16 16" fill="none" stroke="#777">
          <circle cx="8" cy="8" r="7" />
          <path d="M8 4v8M4 8h8" strokeWidth="2" />
        </svg>
      </AddSheet>
      <HDots>
        <i />
        <i />
        <i />
      </HDots>
      <HScroll>
        <HScrollLeft>
          <Tri dir="l" color="#666" />
        </HScrollLeft>
      </HScroll>
    </SheetBar>

    <Selection />

    <CrossCursor>
      <svg width="18" height="18" viewBox="0 0 18 18">
        <path d="M6.500 2.500h5v4h4v5h-4v4h-5v-4h-4v-5h4z" fill="#fff" stroke="#000" strokeWidth="1.500" />
      </svg>
    </CrossCursor>

    <Popup>
      <PopupTabs>
        <PopupTab $w={45} $active $sep>格式</PopupTab>
        <PopupTab $w={49} $sep>图表</PopupTab>
        <PopupTab $w={50} $sep>汇总</PopupTab>
        <PopupTab $w={37} $sep>表</PopupTab>
        <PopupTab $w={62}>迷你图</PopupTab>
      </PopupTabs>
      <PopupCards>
        <PopupCard>
          <QuickSheetIcon mark={<><rect x="5" y="2" width="12" height="5" fill="#4f81bd" /><rect x="5" y="14" width="8" height="5" fill="#4f81bd" /></>} />
          数据条
        </PopupCard>
        <PopupCard>
          <QuickSheetIcon mark={<><rect x="2" y="7" width="26" height="5" fill="#8fb8dd" /><rect x="2" y="13" width="26" height="5" fill="#e9c27a" /><rect x="2" y="19" width="26" height="5" fill="#dd6b4a" /></>} />
          色阶
        </PopupCard>
        <PopupCard>
          <QuickSheetIcon mark={<rect x="2" y="2" width="8" height="6" fill="#e9c27a" />} />
          图标集
        </PopupCard>
        <PopupCard>
          <QuickSheetIcon mark={<><rect x="10" y="7" width="10" height="5" fill="#e9a36b" /><rect x="15" y="16" width="15" height="13" fill="#fff" stroke="#555" /><text x="20" y="27" fontSize="11" fill="#444">&gt;</text></>} />
          大于
        </PopupCard>
        <PopupCard>
          <QuickSheetIcon mark={<><rect x="10" y="7" width="10" height="5" fill="#e9a36b" /><rect x="15" y="16" width="15" height="13" fill="#fff" stroke="#555" /><text x="17" y="27" fontSize="10" fill="#444">ab</text></>} />
          文本包含
        </PopupCard>
        <PopupCard>
          <QuickSheetIcon mark={<><rect x="10" y="7" width="10" height="5" fill="#e9a36b" /><path d="M16 26l10-10 4 3-10 9z" fill="#e98a9c" /></>} />
          清除格式
        </PopupCard>
      </PopupCards>
      <PopupNote>条件格式使用规则突出显示感兴趣的数据。</PopupNote>
    </Popup>
    <PopupArrow />
    <FillHandle />

    <Watermark>
      <WatermarkBadge>TAG</WatermarkBadge>
      <WatermarkText>
        <WatermarkCn>电脑技术网</WatermarkCn>
        <WatermarkUrl>www.tagxp.com</WatermarkUrl>
      </WatermarkText>
    </Watermark>
  </Frame>
);

export default App;
